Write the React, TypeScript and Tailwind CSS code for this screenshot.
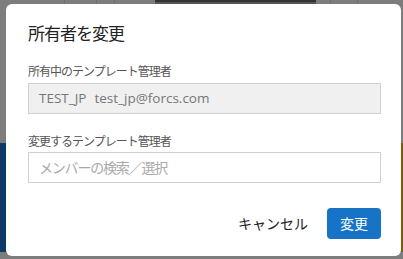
import React from "react";

const font = { fontFamily: '"Open Sans", "Noto Sans CJK JP", sans-serif' };

const ChangeOwnerDialog = () => {
  return (
    <div className="absolute left-[6px] top-[4px] flex h-[252px] w-[395px] flex-col rounded-[6px] bg-white pl-[22px] pr-[20px] pt-[18px]">
      {/* Title */}
      <h2 className="text-[17px] leading-[24px] tracking-[-1px] text-[#222]">所有者を変更</h2>

      {/* Current owner */}
      <div className="mt-[17px] text-[12px] leading-[18px] tracking-[-1px] text-[#555]">所有中のテンプレート管理者</div>
      <div className="mt-[2px] flex h-[31px] items-center border border-[#d0d0d0] bg-[#f0f0f0] px-[10px] text-[13.5px] text-[#777]">
        <span>TEST_JP</span>
        <span className="ml-[8px]">test_jp@forcs.com</span>
      </div>

      {/* New owner */}
      <div className="mt-[19px] text-[12px] leading-[18px] tracking-[-1px] text-[#555]">変更するテンプレート管理者</div>
      <input
        className="mt-[1px] h-[31px] border border-[#d0d0d0] bg-white px-[10px] text-[14px] tracking-[-1.2px] outline-none placeholder:text-[#aaa]"
        placeholder="メンバーの検索／選択"
        style={font}
      />

      {/* Actions */}
      <div className="mt-auto mb-[17px] flex items-center justify-end gap-[19px]">
        <button className="text-[14px] text-[#222]">キャンセル</button>
        <button className="h-[31px] w-[54px] rounded-[4px] bg-[#1673c5] text-[14px] text-white">変更</button>
      </div>
    </div>
  );
};

export default function App() {
  return (
    <div className="relative h-[259px] w-[403px] overflow-hidden bg-[#7d7d7d]" style={font}>
      {/* dimmed page behind the modal */}
      <div className="absolute left-0 top-0 flex h-[4px] w-full">
        <div className="h-full w-[65px] border-r border-[#6f6f6f]" />
        <div className="h-full w-[32px] border-r border-[#6f6f6f]" />
        <div className="h-full w-[18px] border-r border-[#6f6f6f]" />
        <div className="h-full w-[40px]" />
        <div className="h-full w-[161px] border-t-[2px] border-[#333] bg-[#555]" />
        <div className="h-full w-[15px] border-r border-[#6f6f6f]" />
        <div className="h-full w-[27px] border-r border-[#6f6f6f]" />
      </div>
      <div className="absolute left-0 top-[143px] h-[109px] w-[8px] bg-[#0b3a66]" />
      <div className="absolute right-0 top-[143px] h-[109px] w-[4px] bg-[#7a5a10]" />
      <ChangeOwnerDialog />
    </div>
  );
}
